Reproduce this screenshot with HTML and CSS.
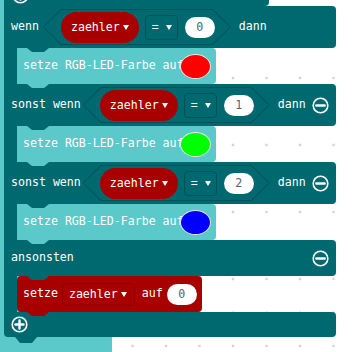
FILE: index.html
```html
<html>
<head>
    <title>Blocks</title>
    <link rel="stylesheet" href="styles.css">
</head>
<body>
    <div class="parent">
        <div class="prev">
            <svg class="icon prev-icon" viewBox="0 0 17 17" width="17" height="17"><circle cx="8.5" cy="8.5" r="7.3" fill="none" stroke="#fff" stroke-width="1.6"/><path d="M4.5 8.5h8M8.5 4.5v8" stroke="#fff" stroke-width="2.4" stroke-linecap="round"/></svg>
        </div>
        <div class="if-block">
            <!-- wenn -->
            <div class="row head tab">
                <span class="label">wenn</span>
                <div class="cond first">
                    <span class="var">zaehler<i class="caret"></i></span>
                    <span class="op">=<i class="caret"></i></span>
                    <span class="num">0</span>
                </div>
                <span class="label then">dann</span>
            </div>
            <div class="slot">
                <div class="arm"></div>
                <div class="stmt light">
                    <span class="label">setze RGB-LED-Farbe auf</span>
                    <span class="swatch" style="background: #ff0000"></span>
                </div>
            </div>
            <!-- sonst wenn 1 -->
            <div class="row tab">
                <span class="label">sonst wenn</span>
                <div class="cond">
                    <span class="var">zaehler<i class="caret"></i></span>
                    <span class="op">=<i class="caret"></i></span>
                    <span class="num">1</span>
                </div>
                <span class="label then">dann</span>
                <svg class="icon end" viewBox="0 0 17 17" width="17" height="17"><circle cx="8.5" cy="8.5" r="7.3" fill="none" stroke="#fff" stroke-width="1.6"/><path d="M4.5 8.5h8" stroke="#fff" stroke-width="2.6" stroke-linecap="round"/></svg>
            </div>
            <div class="slot">
                <div class="arm"></div>
                <div class="stmt light">
                    <span class="label">setze RGB-LED-Farbe auf</span>
                    <span class="swatch" style="background: #00ff00"></span>
                </div>
            </div>
            <!-- sonst wenn 2 -->
            <div class="row tab">
                <span class="label">sonst wenn</span>
                <div class="cond">
                    <span class="var">zaehler<i class="caret"></i></span>
                    <span class="op">=<i class="caret"></i></span>
                    <span class="num">2</span>
                </div>
                <span class="label then">dann</span>
                <svg class="icon end" viewBox="0 0 17 17" width="17" height="17"><circle cx="8.5" cy="8.5" r="7.3" fill="none" stroke="#fff" stroke-width="1.6"/><path d="M4.5 8.5h8" stroke="#fff" stroke-width="2.6" stroke-linecap="round"/></svg>
            </div>
            <div class="slot">
                <div class="arm"></div>
                <div class="stmt light">
                    <span class="label">setze RGB-LED-Farbe auf</span>
                    <span class="swatch" style="background: #0000ff"></span>
                </div>
            </div>
            <!-- ansonsten -->
            <div class="row short tab">
                <span class="label">ansonsten</span>
                <svg class="icon end" viewBox="0 0 17 17" width="17" height="17"><circle cx="8.5" cy="8.5" r="7.3" fill="none" stroke="#fff" stroke-width="1.6"/><path d="M4.5 8.5h8" stroke="#fff" stroke-width="2.6" stroke-linecap="round"/></svg>
            </div>
            <div class="slot">
                <div class="arm"></div>
                <div class="stmt red">
                    <span class="label">setze</span>
                    <span class="drop">zaehler<i class="caret"></i></span>
                    <span class="label auf">auf</span>
                    <span class="num">0</span>
                </div>
            </div>
            <div class="row foot">
                <svg class="icon" viewBox="0 0 17 17" width="17" height="17"><circle cx="8.5" cy="8.5" r="7.3" fill="none" stroke="#fff" stroke-width="1.6"/><path d="M4.5 8.5h8M8.5 4.5v8" stroke="#fff" stroke-width="2.4" stroke-linecap="round"/></svg>
            </div>
        </div>
    </div>
</body>
</html>
```

FILE: styles.css
```css
* {
  box-sizing: border-box;
}
body {
  margin: 0;
  overflow: hidden;
  background-color: #fff;
  background-image: radial-gradient(circle, #d4d4d4 1.1px, transparent 1.7px);
  background-size: 33.5px 33.5px;
  background-position: 15.25px -5.75px;
  font-family: 'DejaVu Sans Mono', monospace;
  font-size: 11.6px;
  color: white;
}
.parent {
  width: 112px;
  height: 352px;
  background: #5bc8c9;
  padding-left: 4px;
}
.prev {
  position: relative;
  width: 265px;
  height: 6px;
  background: #006970;
  border-bottom-right-radius: 4px;
}
.prev-icon {
  position: absolute;
  left: 8px;
  top: -13px;
}
.prev::after {
  content: "";
  position: absolute;
  left: 12px;
  top: 100%;
  width: 22px;
  height: 5px;
  background: #006970;
  clip-path: polygon(0 0, 100% 0, calc(100% - 5px) 100%, 5px 100%);
  z-index: 2;
}
.if-block {
  width: 332px;
}
        .row {
          position: relative;
          display: flex;
          align-items: center;
          height: 42px;
          padding: 0 7px 0 7px;
          background: #006970;
          border-radius: 0 4px 4px 0;
        }
        .row.short {
          height: 36px;
        }
        .row.foot {
          height: 25px;
          border-radius: 0 4px 4px 4px;
        }
        .row.tab::after, .row.foot::after {
          content: "";
          position: absolute;
          left: 23px;
          top: 100%;
          width: 22px;
          height: 4px;
          background: #006970;
          clip-path: polygon(0 0, 100% 0, calc(100% - 5px) 100%, 5px 100%);
          z-index: 2;
        }
        .row.foot::after {
          left: 11px;
          height: 6px;
        }
        .label {
          white-space: pre;
          line-height: 1;
        }
        .then {
          margin-left: 8px;
        }
        .icon {
          display: block;
          flex: none;
        }
        .end {
          margin-left: auto;
        }
        .cond {
          position: relative;
          isolation: isolate;
          display: flex;
          align-items: center;
          height: 36px;
          margin-left: 2px;
          padding: 0 16px 0 17px;
        }
        .cond.first {
          margin-left: 4px;
          padding-left: 18px;
        }
        .cond::before, .cond::after {
          content: "";
          position: absolute;
          inset: 0;
          z-index: -1;
          background: #00525a;
          clip-path: polygon(18px 0, calc(100% - 18px) 0, 100% 50%, calc(100% - 18px) 100%, 18px 100%, 0 50%);
        }
        .cond::after {
          inset: 1px;
          background: #006970;
          clip-path: polygon(17.5px 0, calc(100% - 17.5px) 0, 100% 50%, calc(100% - 17.5px) 100%, 17.5px 100%, 0 50%);
        }
        .var {
          display: flex;
          align-items: center;
          height: 31px;
          padding: 0 10px;
          border-radius: 16px;
          background: #a80000;
        }
        .caret {
          display: block;
          width: 0;
          height: 0;
          margin-left: 3px;
          border-left: 3.5px solid transparent;
          border-right: 3.5px solid transparent;
          border-top: 5px solid white;
        }
        .op {
          display: flex;
          align-items: center;
          justify-content: space-between;
          width: 33px;
          height: 25px;
          margin-left: 6px;
          padding: 0 5px 0 6px;
          border: 1px solid #00525a;
          border-radius: 4px;
        }
        .num {
          display: flex;
          align-items: center;
          justify-content: center;
          width: 30px;
          height: 21px;
          margin-left: 7px;
          border-radius: 11px;
          background: white;
          color: #575e75;
        }
        .slot {
          display: flex;
        }
        .arm {
          width: 13px;
          background: #006970;
        }
        .stmt {
          position: relative;
          display: flex;
          align-items: center;
          height: 36px;
          padding: 0 5px 0 6px;
          border-radius: 4px;
        }
        .stmt::after {
          content: "";
          position: absolute;
          left: 10px;
          top: 100%;
          width: 22px;
          height: 4px;
          background: inherit;
          clip-path: polygon(0 0, 100% 0, calc(100% - 5px) 100%, 5px 100%);
          z-index: 2;
        }
        .light {
          background: #5bc8c9;
        }
        .red {
          background: #a80000;
        }
        .swatch {
          width: 31px;
          height: 25px;
          margin-left: -4px;
          border: 1px solid #e8e8e8;
          border-radius: 50%;
        }
        .drop {
          display: flex;
          align-items: center;
          height: 23px;
          margin-left: 4px;
          padding: 0 7px 0 6px;
          border: 1px solid #8c0000;
          border-radius: 4px;
        }
        .auf {
          margin-left: 7px;
        }
        .red .num {
          margin-left: 4px;
        }
```
